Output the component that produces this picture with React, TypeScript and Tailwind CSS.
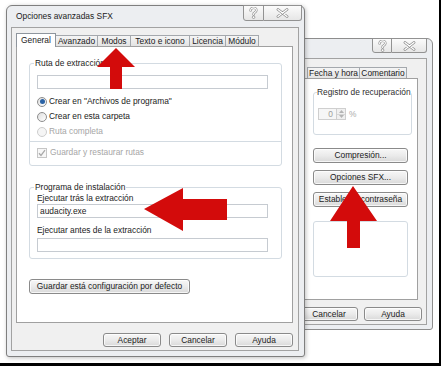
import React from 'react';

const btn =
  'flex items-center justify-center rounded-[3px] border border-[#8a8a8a] bg-linear-to-b from-[#f7f7f7] via-[#ebebeb] to-[#d9d9d9] text-[#1b1b1b] shadow-[inset_0_0_0_1px_rgba(255,255,255,0.75)]';
const group = 'rounded-[3px] border border-[#d3dbe2]';
const field = 'h-[14px] border border-[#c6cbd1] bg-white';

function HelpGlyph() {
  return (
    <svg width="9" height="12" viewBox="0 0 9 12">
      <path
        d="M1.6 3.4C1.6 1.7 2.9 0.9 4.5 0.9C6.1 0.9 7.4 1.8 7.4 3.3C7.4 4.9 5.7 5.3 4.8 6.2L4.6 7.5"
        fill="none"
        stroke="#8c8c8c"
        strokeWidth="2.4"
        strokeLinecap="round"
      />
      <path
        d="M1.6 3.4C1.6 1.7 2.9 0.9 4.5 0.9C6.1 0.9 7.4 1.8 7.4 3.3C7.4 4.9 5.7 5.3 4.8 6.2L4.6 7.5"
        fill="none"
        stroke="#fff"
        strokeWidth="1.1"
        strokeLinecap="round"
      />
      <circle cx="4.6" cy="10.2" r="1.3" fill="#fff" stroke="#8c8c8c" strokeWidth="0.8" />
    </svg>
  );
}

function CloseGlyph() {
  return (
    <svg width="13" height="10" viewBox="0 0 13 10">
      <path d="M2 1.5L11 8.5M11 1.5L2 8.5" stroke="#8c8c8c" strokeWidth="2.8" strokeLinecap="round" />
      <path d="M2 1.5L11 8.5M11 1.5L2 8.5" stroke="#fff" strokeWidth="1.3" strokeLinecap="round" />
    </svg>
  );
}

function Tab({ label, w, selected }: { label: string; w: string; selected?: boolean }) {
  if (selected) {
    return (
      <div className={`relative z-10 -mb-px flex h-[14px] items-center justify-center border border-b-0 border-[#8e959d] bg-white ${w}`}>
        {label}
      </div>
    );
  }
  return (
    <div
      className={`-ml-px flex h-[11px] items-center justify-center border border-b-0 border-[#a4a8ad] bg-linear-to-b from-[#f5f5f5] to-[#e3e3e3] ${w}`}
    >
      {label}
    </div>
  );
}

function Radio({ checked, disabled }: { checked?: boolean; disabled?: boolean }) {
  return (
    <span
      className={`flex h-[10px] w-[10px] items-center justify-center rounded-full border ${
        disabled ? 'border-[#cdcdcd] bg-[#f5f5f5]' : 'border-[#8d8d8d] bg-linear-to-br from-[#dedede] to-white'
      }`}
    >
      {checked && <span className="h-[5px] w-[5px] rounded-full bg-[#2b63a6]" />}
    </span>
  );
}

function BackDialog() {
  return (
    <div className="absolute left-[200px] top-[38px] flex h-[292px] w-[233px] flex-col rounded-t-[6px] rounded-b-[3px] border border-[#8d8d8d] bg-[#eceef1] pb-[4px] pl-[4px] pr-[5px]">
      <div className="h-[19px]" />
      <div className="absolute right-[5px] top-[-1px] flex h-[15px]">
        <div className="flex w-[20px] items-center justify-center rounded-bl-[3px] border border-[#929292] bg-linear-to-b from-[#fbfbfb] to-[#e6e6e6]">
          <HelpGlyph />
        </div>
        <div className="flex w-[35px] items-center justify-center rounded-br-[3px] border border-l-0 border-[#929292] bg-linear-to-b from-[#fbfbfb] to-[#e6e6e6]">
          <CloseGlyph />
        </div>
      </div>
      <div className="flex flex-1 flex-col border border-[#a2a2a2] bg-[#f0f0f0] pl-[4px] pt-[6px]">
        <div className="mr-[8px] flex h-[13px] items-end justify-end pr-[11px]">
          <Tab label="Fecha y hora" w="w-[53px]" />
          <Tab label="Comentario" w="w-[48px]" />
        </div>
        <div className="mr-[8px] flex h-[222px] justify-end border border-[#a0a0a0] bg-white pr-[9px] pt-[7px]">
          <div className="flex w-[95px] flex-col">
            <fieldset className={`${group} pb-[14px]`}>
              <legend className="ml-[3px] whitespace-nowrap leading-[12px] text-[#2e2e2e]">Registro de recuperación</legend>
              <div className="ml-[4px] mt-[10px] flex h-[12px] items-center">
                <div className="flex h-[12px] w-[19px] items-center justify-end border border-[#cfcfcf] bg-[#f6f6f6] pr-[3px] text-[#9c9c9c]">
                  0
                </div>
                <div className="flex h-[12px] w-[9px] flex-col border border-l-0 border-[#cfcfcf] bg-[#f0f0f0]">
                  <div className="flex flex-1 items-center justify-center border-b border-[#d6d6d6]">
                    <svg width="5" height="3" viewBox="0 0 5 3"><path d="M0 3L2.5 0L5 3Z" fill="#b4b4b4" /></svg>
                  </div>
                  <div className="flex flex-1 items-center justify-center">
                    <svg width="5" height="3" viewBox="0 0 5 3"><path d="M0 0L2.5 3L5 0Z" fill="#b4b4b4" /></svg>
                  </div>
                </div>
                <span className="ml-[3px] text-[#ababab]">%</span>
              </div>
            </fieldset>
            <div className={`${btn} mt-[13px] h-[15px]`}>Compresión...</div>
            <div className={`${btn} mt-[7px] h-[15px]`}>Opciones SFX...</div>
            <div className={`${btn} mt-[7px] h-[15px] whitespace-nowrap`}>Establecer contraseña</div>
            <div className={`${group} mt-[14px] h-[56px]`} />
          </div>
        </div>
        <div className="mr-[4px] mt-[7px] flex justify-end gap-[6px]">
          <div className={`${btn} h-[14px] w-[58px]`}>Cancelar</div>
          <div className={`${btn} h-[14px] w-[58px]`}>Ayuda</div>
        </div>
      </div>
    </div>
  );
}

function FrontDialog() {
  return (
    <div className="absolute left-[6px] top-[5px] flex h-[352px] w-[299px] flex-col rounded-t-[6px] rounded-b-[3px] border border-[#7f7f7f] bg-[#eceef1] pb-[5px] pl-[4px] pr-[5px] shadow-[1px_1px_4px_rgba(0,0,0,0.25)]">
      <div className="flex h-[21px] items-center pl-[5px] text-[#1b1b1b]">Opciones avanzadas SFX</div>
      <div className="absolute right-[2px] top-[-1px] flex h-[16px]">
        <div className="flex w-[21px] items-center justify-center rounded-bl-[3px] border border-[#929292] bg-linear-to-b from-[#fbfbfb] to-[#e6e6e6]">
          <HelpGlyph />
        </div>
        <div className="flex w-[38px] items-center justify-center rounded-br-[3px] border border-l-0 border-[#929292] bg-linear-to-b from-[#fbfbfb] to-[#e6e6e6]">
          <CloseGlyph />
        </div>
      </div>
      <div className="flex flex-1 flex-col border border-[#a2a2a2] bg-[#f0f0f0] pt-[5px]">
        <div className="ml-[4px] mr-[5px] flex h-[13px] items-end">
          <Tab label="General" w="w-[40px]" selected />
          <Tab label="Avanzado" w="w-[43px]" />
          <Tab label="Modos" w="w-[34px]" />
          <Tab label="Texto e icono" w="w-[60px]" />
          <Tab label="Licencia" w="w-[37px]" />
          <Tab label="Módulo" w="w-[34px]" />
        </div>
        <div className="ml-[4px] mr-[5px] flex h-[277px] flex-col items-stretch border border-[#a0a0a0] bg-white pl-[12px] pr-[10px] pt-[10px]">
          <fieldset className={`${group} pb-[5px] pl-[7px] pr-[13px]`}>
            <legend className="-ml-[3px] px-[1px] leading-[12px]">Ruta de extracción</legend>
            <div className={`${field} mt-[6px]`} />
            <div className="mt-[5px] flex h-[15px] items-center gap-[2px]">
              <Radio checked />
              <span>Crear en "Archivos de programa"</span>
            </div>
            <div className="flex h-[15px] items-center gap-[2px]">
              <Radio />
              <span>Crear en esta carpeta</span>
            </div>
            <div className="flex h-[15px] items-center gap-[2px] text-[#a6a6a6]">
              <Radio disabled />
              <span>Ruta completa</span>
            </div>
            <div className="-ml-[7px] -mr-[13px] mt-[2px] border-t border-[#d3dbe2]" />
            <div className="mt-[3px] flex h-[15px] items-center gap-[3px] text-[#a6a6a6]">
              <span className="flex h-[10px] w-[10px] items-center justify-center border border-[#c6c6c6] bg-[#f7f7f7]">
                <svg width="8" height="8" viewBox="0 0 8 8">
                  <path d="M1 4.2L3 6.4L7 1.2" fill="none" stroke="#a9a9a9" strokeWidth="1.3" />
                </svg>
              </span>
              <span>Guardar y restaurar rutas</span>
            </div>
          </fieldset>
          <fieldset className={`${group} mt-[15px] pb-[6px] pl-[7px] pr-[13px]`}>
            <legend className="-ml-[3px] px-[1px] leading-[12px]">Programa de instalación</legend>
            <div className="h-[11px] leading-[11px]">Ejecutar trás la extracción</div>
            <div className={`${field} flex items-center pl-[2px]`}>audacity.exe</div>
            <div className="mt-[7px] h-[11px] leading-[11px]">Ejecutar antes de la extracción</div>
            <div className={`${field} mt-[2px]`} />
          </fieldset>
          <div className={`${btn} mt-[20px] h-[15px] w-[161px] whitespace-nowrap`}>Guardar está configuración por defecto</div>
        </div>
        <div className="ml-[4px] mr-[5px] mt-[10px] flex justify-end gap-[8px]">
          <div className={`${btn} h-[14px] w-[58px]`}>Aceptar</div>
          <div className={`${btn} h-[14px] w-[58px]`}>Cancelar</div>
          <div className={`${btn} h-[14px] w-[58px]`}>Ayuda</div>
        </div>
      </div>
    </div>
  );
}

function Arrows() {
  return (
    <svg className="pointer-events-none absolute left-0 top-0" width="441" height="366" viewBox="0 0 441 366">
      <g fill="#d30b0b">
        <polygon points="116,48 135,67 122,67 122,89 110,89 110,67 97,67" />
        <polygon points="144,209 183,188 183,199 227,199 227,220 183,220 183,231" />
        <polygon points="353,186 377,221 360,221 360,248 347,248 347,221 330,221" />
      </g>
    </svg>
  );
}

export default function App() {
  return (
    <div className="relative h-[366px] w-[441px] overflow-hidden border-b-[3px] border-r-2 border-black bg-white font-['Liberation_Sans',Arial,sans-serif] text-[8.4px] leading-[11px] text-[#1b1b1b]">
      <BackDialog />
      <FrontDialog />
      <Arrows />
    </div>
  );
}
